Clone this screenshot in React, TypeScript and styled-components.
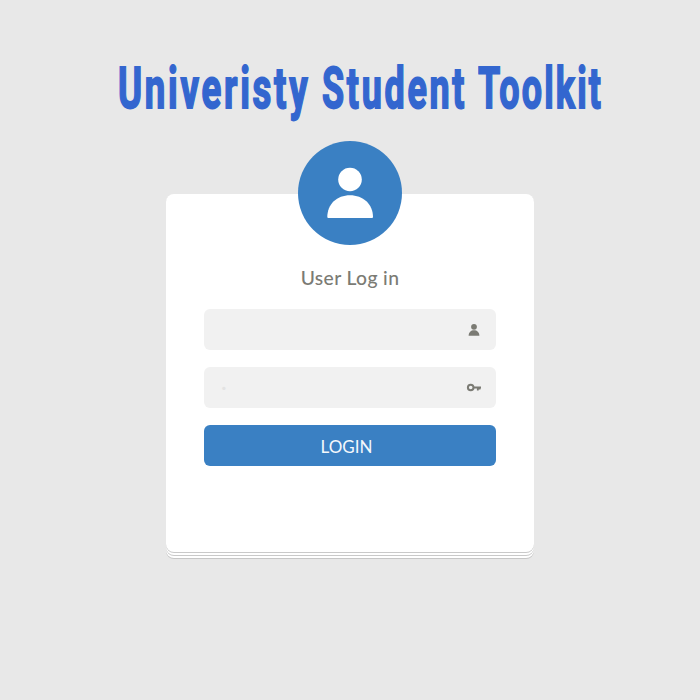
import React from 'react';
import styled, { createGlobalStyle } from 'styled-components';

const GlobalStyle = createGlobalStyle`
  * { box-sizing: border-box; }
  body { margin: 0; background: #e8e8e8; font-family: Lato, sans-serif; }
`;

const Page = styled.main`
  width: 700px;
  height: 700px;
  padding-top: 54px;
  overflow: hidden;
  background: #e8e8e8;
  display: flex;
  flex-direction: column;
  align-items: center;
`;

const Title = styled.h1`
  width: 484px;
  height: 70px;
  margin: 0 0 0 20px;
  display: flex;
  gap: 13px;
  color: #3366cf;
  font: 700 57px/69px Roboto, sans-serif;
  -webkit-text-stroke: 1.8px #3366cf;
`;

const Word = styled.span<{ $width: number; $scale: number; $spacing: number }>`
  flex: none;
  width: ${(p) => p.$width}px;
  white-space: nowrap;
  letter-spacing: ${(p) => p.$spacing}px;
  transform: scaleX(${(p) => p.$scale});
  transform-origin: left;
`;

const Avatar = styled.div`
  position: relative;
  z-index: 1;
  flex: none;
  width: 104px;
  height: 104px;
  margin-top: 17px;
  border-radius: 50%;
  background: #3a80c3;
  svg { display: block; }
`;

const Card = styled.section`
  flex: none;
  width: 368px;
  height: 358px;
  margin-top: -51px;
  padding: 70px 38px 0;
  border-radius: 8px;
  background: #fff;
  box-shadow: 0 1px 0 #c9c9c9, 0 3px 0 #fff, 0 4px 0 #c9c9c9, 0 6px 0 #fff, 0 7px 0 #c6c6c6;
  display: flex;
  flex-direction: column;
  align-items: center;
`;

const Heading = styled.h2`
  margin: 0 0 17px;
  color: #7b7b74;
  font: 500 19.3px/28px Lato, sans-serif;
  letter-spacing: 0.38px;
  white-space: nowrap;
`;

const Field = styled.label`
  width: 292px;
  height: 41px;
  margin-bottom: 17px;
  padding: 0 14px 0 17px;
  border-radius: 6px;
  background: #f1f1f1;
  display: flex;
  align-items: center;
`;

const Input = styled.input`
  flex: 1;
  min-width: 0;
  border: 0;
  outline: 0;
  padding: 0 0 3px;
  background: transparent;
  color: #7b7b74;
  font: 22px Lato, sans-serif;
  &::placeholder { color: #e3e3e3; opacity: 1; }
`;

const Button = styled.button`
  width: 292px;
  height: 41px;
  border: 0;
  border-radius: 6px;
  padding: 2px 0 0;
  background: #3a80c3;
  color: #f4f8fc;
  font: 400 17px/39px Lato, sans-serif;
  text-indent: -7px;
`;

const words = [
  { text: 'Univeristy', width: 191, scale: 0.643, spacing: 4.2 },
  { text: 'Student', width: 143, scale: 0.63, spacing: 4.3 },
  { text: 'Toolkit', width: 123, scale: 0.63, spacing: 3.4 },
];

export default function App() {
  return (
    <>
      <GlobalStyle />
      <Page>
        <Title>
          {words.map((w) => (
            <Word key={w.text} $width={w.width} $scale={w.scale} $spacing={w.spacing}>{w.text}</Word>
          ))}
        </Title>
        <Avatar>
          <svg width="104" height="104" viewBox="0 0 104 104" fill="#fff">
            <circle cx="52" cy="38.5" r="11.8" />
            <path d="M29.3 76C29.3 63 39 54.2 52 54.2S75 63 75 76Q75 77 74 77H30.3Q29.3 77 29.3 76Z" />
          </svg>
        </Avatar>
        <Card>
          <Heading>User Log in</Heading>
          <Field>
            <Input aria-label="Username" />
            <svg width="16" height="16" viewBox="0 0 16 16" fill="#7b7b74">
              <circle cx="8" cy="4.8" r="2.9" />
              <path d="M2.6 13.8C2.7 10.2 5 8.3 8 8.3S13.3 10.2 13.4 13.8Z" />
            </svg>
          </Field>
          <Field>
            <Input aria-label="Password" placeholder="·" />
            <svg width="16" height="16" viewBox="0 0 16 16" fill="none" stroke="#7b7b74">
              <circle cx="4.7" cy="7.5" r="2.8" strokeWidth="2" />
              <path d="M7.5 7.5H15M11.8 7.5V10.5M13.6 7.5V9.5" strokeWidth="1.8" />
            </svg>
          </Field>
          <Button>LOGIN</Button>
        </Card>
      </Page>
    </>
  );
}
